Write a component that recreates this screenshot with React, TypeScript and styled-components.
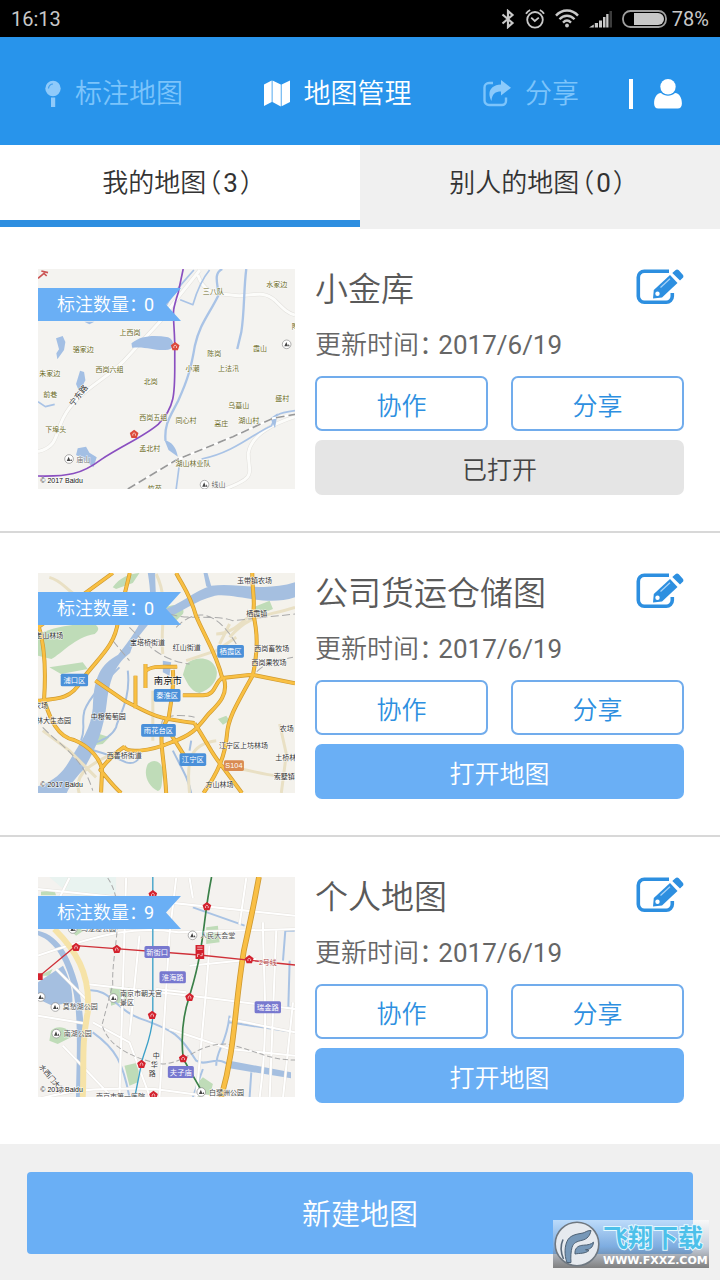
import React from 'react';
import styled, { createGlobalStyle, css } from 'styled-components';

const GlobalStyle = createGlobalStyle`
  * { box-sizing: border-box; }
  body {
    margin: 0;
    background: #fff;
    font-family: Roboto, "Noto Sans CJK SC", sans-serif;
    font-weight: 350;
    color: #333;
  }
  button { font: inherit; cursor: pointer; padding: 0; border: 0; }
  a { color: inherit; text-decoration: none; }
`;

const Page = styled.div`
  position: relative;
  min-height: 100vh;
  display: flex;
  flex-direction: column;
  background: #f0f0f0;
`;

const Digits = styled.span`
  font-weight: 400;
`;

const StatusBar = styled.div`
  display: flex;
  align-items: center;
  justify-content: space-between;
  height: 37px;
  padding: 0 11px;
  background: #000;
  color: #c8c8c8;
  font-size: 20px;
`;

const StatusIcons = styled.div`
  display: flex;
  align-items: center;
  gap: 10px;
`;

const Battery = styled.div`
  display: flex;
  align-items: center;
  gap: 5px;
`;

const Nav = styled.nav`
  display: flex;
  align-items: center;
  height: 108px;
  padding: 5px 38px 0 44px;
  background: #2894eb;
  color: #fff;
`;

const NavLinks = styled.div`
  flex: 1;
  display: flex;
  justify-content: space-between;
`;

const NavLink = styled.a<{ $active?: boolean }>`
  display: flex;
  align-items: center;
  gap: 13px;
  padding-left: ${(p) => (p.$active ? 8 : 0)}px;
  font-size: 27px;
  line-height: 40px;
  color: ${(p) => (p.$active ? '#fff' : '#7cc4fb')};
`;

const Divider = styled.span`
  width: 4px;
  height: 30px;
  margin: 0 21px 0 50px;
  background: #fff;
`;

const IconButton = styled.button`
  display: flex;
  background: none;
`;

const Tabs = styled.div`
  display: flex;
  height: 84px;
  background: #fff;
`;

const Tab = styled.button<{ $active?: boolean }>`
  flex: 1;
  display: flex;
  align-items: center;
  justify-content: center;
  gap: 2px;
  padding: 0 5px 9px 0;
  font-size: 26px;
  line-height: 38px;
  color: #333;
  font-feature-settings: "halt";
  background: #f0f0f0;
  ${(p) =>
    p.$active &&
    css`
      height: 82px;
      padding-bottom: 0;
      background: #fff;
      border-bottom: 7px solid #2d8ee0;
    `}
`;

const TabCount = styled.span`
  display: flex;
  gap: 2px;
`;

const CardList = styled.main`
  background: #fff;
`;

const Card = styled.article`
  display: flex;
  gap: 20px;
  padding: 40px 36px 36px 38px;
  border-bottom: 2px solid #d8d8d8;
  &:last-child {
    padding-bottom: 41px;
    border-bottom: 0;
  }
`;

const MapThumb = styled.div`
  position: relative;
  flex: none;
  width: 257px;
  height: 220px;
  overflow: hidden;
  background: #f4f3f0;
`;

const MapSvg = styled.svg`
  display: block;
  width: 100%;
  height: 100%;
  font-family: "Liberation Sans", "Noto Sans CJK SC", sans-serif;
  font-weight: 400;
`;

const Ribbon = styled.span`
  position: absolute;
  left: 0;
  top: 19px;
  display: flex;
  gap: 6px;
  width: 143px;
  height: 33px;
  padding-left: 19px;
  font-size: 18px;
  line-height: 33px;
  white-space: nowrap;
  color: #fff;
  background: #6aaff5;
  font-feature-settings: "halt";
  clip-path: polygon(0 0, 100% 0, 128px 50%, 100% 100%, 0 100%);
`;

const CardBody = styled.div`
  flex: 1;
  min-width: 0;
`;

const CardHead = styled.div`
  display: flex;
  justify-content: space-between;
  align-items: flex-start;
`;

const CardTitle = styled.h2`
  margin: 0;
  font-size: 33px;
  line-height: 42px;
  font-weight: inherit;
  color: #5a5a5a;
`;

const Updated = styled.p`
  margin: 17px 0 14px;
  font-size: 26px;
  line-height: 34px;
  color: #666;
  font-feature-settings: "halt";
`;

const ButtonRow = styled.div`
  display: flex;
  gap: 23px;
  margin-bottom: 9px;
`;

const OutlineButton = styled.button`
  flex: 1;
  height: 55px;
  padding-top: 1px;
  border: 2px solid #71acec;
  border-radius: 7px;
  background: #fff;
  color: #2d8fe0;
  font-size: 25px;
`;

const OpenButton = styled.button`
  display: block;
  width: 100%;
  height: 55px;
  padding-top: 1px;
  border-radius: 7px;
  background: #6aaff5;
  color: #fff;
  font-size: 25px;
  &:disabled {
    background: #e5e5e5;
    color: #444;
    cursor: default;
  }
`;

const Footer = styled.footer`
  padding: 28px 27px 26px;
`;

const CreateButton = styled.button`
  display: block;
  width: 100%;
  height: 82px;
  padding-bottom: 2px;
  border-radius: 4px;
  background: #6aaff5;
  color: #fff;
  font-size: 29px;
`;

const Watermark = styled.div`
  position: absolute;
  right: 11px;
  bottom: 12px;
  display: flex;
  gap: 3px;
  width: 156px;
  height: 48px;
  padding: 1px 1px 0;
  background: linear-gradient(rgba(255, 255, 255, 0.55), rgba(150, 170, 200, 0.45) 55%, rgba(90, 90, 90, 0.75));
`;

const WatermarkText = styled.div`
  display: flex;
  flex-direction: column;
`;

const WatermarkName = styled.span`
  font-size: 25px;
  line-height: 36px;
  font-weight: 700;
  color: #4cc0ea;
  -webkit-text-stroke: 2px #e4f8ff;
  paint-order: stroke fill;
`;

const WatermarkUrl = styled.span`
  font-family: "DejaVu Sans", sans-serif;
  font-size: 11px;
  line-height: 8px;
  font-weight: 700;
  color: #fff;
`;

/* ---------- icons ---------- */

const BluetoothIcon = () => (
  <svg width="14" height="20" viewBox="0 0 14 20" fill="none" stroke="#c8c8c8" strokeWidth="2.2">
    <path d="M1.500 5.500 11.500 14 7 18V2L11.500 6 1.500 14.500" />
  </svg>
);

const AlarmIcon = () => (
  <svg width="20" height="20" viewBox="0 0 20 20" fill="none" stroke="#c8c8c8" strokeWidth="1.8">
    <circle cx="10" cy="10.8" r="7.8" />
    <path d="M1 4.800C2 3 3.400 1.800 5.200 1M19 4.800C18 3 16.600 1.800 14.800 1M6.200 8.600 9.800 12l4-3.400" />
  </svg>
);

const WifiIcon = () => (
  <svg width="24" height="19" viewBox="0 0 24 19" fill="none" stroke="#c8c8c8" strokeWidth="2.4">
    <path d="M1 6.600C7-.2 17-.2 23 6.600M4.500 10.200c4.300-4.600 10.700-4.600 15 0M8 13.600c2.500-2.500 5.500-2.500 8 0" />
    <circle cx="12" cy="16.500" r="1.900" fill="#c8c8c8" stroke="none" />
  </svg>
);

const SignalIcon = () => (
  <svg width="23" height="18" viewBox="0 0 23 18" fill="#c8c8c8">
    <path d="M0 17.500 4.800 14.500v3zM5.800 13H9v4.500H5.800zM10 10.500h3v7h-3zM14 7h2.500v10.500H14zM17.200 4h2.300v13.500h-2.300z" />
    <path d="M20.500 1H23v16.500h-2.500z" fill="#3c3c3c" />
  </svg>
);

const BatteryIcon = () => (
  <svg width="45" height="18" viewBox="0 0 45 18">
    <rect x="1" y="1" width="43" height="16" rx="7.500" fill="none" stroke="#a0a0a0" strokeWidth="1.800" />
    <path d="M12 3h24a6 6 0 0 1 0 12H12z" fill="#c8c8c8" />
  </svg>
);

const PinIcon = () => (
  <svg width="18" height="28" viewBox="0 0 18 28">
    <circle cx="9" cy="8.500" r="7.700" fill="#8fcafa" />
    <path d="M4.500 8.500A4.500 4.500 0 0 1 9 4" fill="none" stroke="#3f9fee" strokeWidth="1.200" />
    <path d="M7 17.500h4.200V27H7z" fill="#8fcafa" />
  </svg>
);

const MapIcon = () => (
  <svg width="28" height="28" viewBox="0 0 28 28" fill="#fff">
    <path d="M1 4.500 8.700.5v21.500L1 26zM9.500.5l8.300 4V26.500l-8.300-4.500zM18.600 4.500 27 .5v21.500l-8.400 4.300z" />
  </svg>
);

const ShareIcon = () => (
  <svg width="29" height="27" viewBox="0 0 29 27">
    <path d="M10 3H6A4.500 4.500 0 0 0 1.500 7.500v13A4.500 4.500 0 0 0 6 25h13a4 4 0 0 0 4-4v-3.500" fill="none" stroke="#7cc4fb" strokeWidth="2.400" />
    <path d="M18 0l10 7.800-10 7.800v-4c-5.500 0-9 2.400-9.500 9.300C3.500 12 8 4.600 18 4.400z" fill="#8bcafb" />
  </svg>
);

const UserIcon = () => (
  <svg width="28" height="30" viewBox="0 0 28 30" fill="#fff">
    <circle cx="14" cy="7.800" r="7.700" />
    <path d="M7 14c4 3.600 10 3.600 14 0 4.700.5 6.900 5 6.900 10.500 0 3-1.500 5-4.200 5H4.300c-2.700 0-4.200-2-4.200-5C.1 19 2.300 14.500 7 14z" />
  </svg>
);

const EditIcon = () => (
  <svg width="50" height="36" viewBox="0 0 50 36" fill="#2d8fe0">
    <path
      d="M35 2.200H10.300a6 6 0 0 0-6 6v19a6 6 0 0 0 6 6h22a6 6 0 0 0 6-6V24"
      fill="none"
      stroke="#2d8fe0"
      strokeWidth="3.600"
    />
    <path d="M19 29.500 19.800 21 36 6l7.500 8L28 28.500z" />
    <path d="M38.300 4 41.400 1.200c1-1 2.500-.9 3.400.1l4 4.400c.9 1 .8 2.500-.2 3.400L46 11.500z" />
    <circle cx="23.500" cy="24.700" r="2.200" fill="#fff" />
    <path d="M26.500 18.500 36 9.800" stroke="#a9d3f7" strokeWidth="1.200" />
  </svg>
);

const WatermarkLogo = () => (
  <svg width="46" height="46" viewBox="0 0 46 46">
    <circle cx="23" cy="23" r="21.800" fill="#e6eaef" stroke="#6f7881" strokeWidth="1.600" />
    <path
      d="M13 41.500C10 34 10.500 24 14 18.500c3.500-5 10-5.500 15-6.500 2.500-.6 3.500-2.500 8-2.500-1 5-3.500 8.500-9 9.800-5 1.200-8.500 2.200-10 7.200-1 4-1.500 9-1 15z"
      fill="#7798b8"
      stroke="#4d6175"
    />
    <path
      d="M21 31c.5-5 4-6.500 8.500-6.800 4.500-.2 7.500-.8 10-3-.5 5.500-4 7.500-8 7.500l3.500.8c-4 3.500-9.500 2.500-14 3.500z"
      fill="#7798b8"
      stroke="#4d6175"
    />
    <path d="M9.500 38C6.500 31 6.500 24 9 18.500" fill="none" stroke="#59697a" strokeWidth="1.600" />
  </svg>
);

/* ---------- map drawings ---------- */

type LabelProps = { x: number; y: number; children: string; size?: number; fill?: string; rotate?: number };

const Label = ({ x, y, children, size = 21, fill = '#333', rotate }: LabelProps) => (
  <text
    x={x}
    y={y}
    fontSize={size}
    fill={fill}
    stroke="#fff"
    strokeWidth="3"
    strokeOpacity="0.8"
    paintOrder="stroke"
    transform={rotate ? `rotate(${rotate} ${x} ${y})` : undefined}
  >
    {children}
  </text>
);

type BadgeProps = { x: number; y: number; w: number; h?: number; fill: string; children: string };

const Badge = ({ x, y, w, h = 38, fill, children }: BadgeProps) => (
  <g>
    <rect x={x} y={y} width={w} height={h} rx="5" fill={fill} />
    <text x={x + w / 2} y={y + h / 2 + 8} fontSize="22" fill="#fff" textAnchor="middle">
      {children}
    </text>
  </g>
);

const Station = ({ x, y, fill = '#d3222e' }: { x: number; y: number; fill?: string }) => (
  <g transform={`translate(${x} ${y})`}>
    <path d="M0-13 13-3 8 12H-8L-13-3z" fill={fill} />
    <path d="M-4 5v-5l4-4 4 4v5" fill="none" stroke="#fff" strokeWidth="2" />
  </g>
);

const Spot = ({ x, y }: { x: number; y: number }) => (
  <g transform={`translate(${x} ${y})`}>
    <circle r="13" fill="#fff" stroke="#888" strokeWidth="2" />
    <path d="M-7 6-1-7 4 6zM4 6 6-1 9 6z" fill="#444" />
  </g>
);

const Copyright = () => (
  <text x="33" y="670" fontSize="21" fill="#111" stroke="#fff" strokeWidth="3" paintOrder="stroke">
    © 2017 Baidu
  </text>
);

const OLIVE = '#6b6a1e';

const VILLAGE_LANES =
  'M26 575c60-15 50-50 75-100 40-80 120-110 180-170l110-120 60-80 60-75M505 45c20 60 60 55 100 60 60 10 90-20 130 15 30 30 40 40 61 45M796 470c-60 20-130 50-140 110 0 60 30 70-70 107';

const VillageMap = () => (
  <MapSvg viewBox="26 27 770 660" preserveAspectRatio="none" aria-hidden="true">
    <rect x="26" y="27" width="770" height="660" fill="#f4f3f0" />
    <path d={VILLAGE_LANES} fill="none" stroke="#e2e0dc" strokeWidth="12" />
    <path d={VILLAGE_LANES} fill="none" stroke="#fcfcfa" strokeWidth="9" />
    <g fill="none" stroke="#a9c3e6" strokeWidth="7" strokeLinejoin="round">
      <path d="M578 27c-30 15-10 50-12 80-30 60-55 85-70 150-10 60-20 100-50 165-25 50-42 70-38 120M650 27c-8 60-5 130-15 190l-12 50" />
      <path d="M408 140c20-40 50-70 85-110M540 30c-25 30-40 70-50 104l-38-15M26 425l22 15 28-7" strokeWidth="5" />
      <path d="M796 452c-60 8-60 15-70 45-50 20-110 80-210 100M450 610l-10 77" strokeWidth="5" />
    </g>
    <g fill="#a3bfe4">
      <path d="M80 235l20-7 8 18-4 24-20 28-3-18 8-12zM140 372l12-40 12 4 4 25-18 35zM306 250c30-25 70-25 110-18 20 8 20 35 0 37-40 5-60-10-108-6zM405 540c20 5 35 20 40 50l-28-20zM145 565l25-5 10 18 22 14-10 30-30-25-22-12zM722 475l22-15-8 45zM165 185h30l-15 8z" />
    </g>
    <path d="M295 687 440 600l170-70 120-55 66-12" fill="none" stroke="#fff" strokeWidth="6" />
    <path d="M295 687 440 600l170-70 120-55 66-12" fill="none" stroke="#999" strokeWidth="5" strokeDasharray="26 12" />
    <path d="M26 648c90 2 130-5 190-50 60-40 130-70 170-105 60-60 48-110 50-235-3-110-12-90 10-160l15-71" fill="none" stroke="#8a4fc0" strokeWidth="5" />
    <path d="M26 55l18-15 8 8M36 33l20 5" fill="none" stroke="#c55" strokeWidth="5" />
    <Station x={437} y={259} fill="#dc4a3a" />
    <Station x={314} y={522} fill="#dc4a3a" />
    <Label x={520} y={103} fill={OLIVE}>三八队</Label>
    <Label x={710} y={80} fill={OLIVE}>水家边</Label>
    <Label x={270} y={224} fill={OLIVE}>上西岗</Label>
    <Label x={130} y={277} fill={OLIVE}>骆家边</Label>
    <Label x={198} y={335} fill={OLIVE}>西岗六组</Label>
    <Label x={30} y={347} fill={OLIVE}>朱家边</Label>
    <Label x={343} y={372} fill={OLIVE}>北岗</Label>
    <Label x={42} y={412} fill={OLIVE}>前巷</Label>
    <Label x={468} y={332} fill={OLIVE}>小潮</Label>
    <Label x={533} y={288} fill={OLIVE}>陈岗</Label>
    <Label x={565} y={332} fill={OLIVE}>上法汛</Label>
    <Label x={670} y={272} fill={OLIVE}>霞山</Label>
    <Label x={786} y={207} fill={OLIVE}>陶</Label>
    <Label x={737} y={422} fill={OLIVE}>盛村</Label>
    <Label x={596} y={444} fill={OLIVE}>乌墓山</Label>
    <Label x={329} y={481} fill={OLIVE}>西岗五组</Label>
    <Label x={438} y={488} fill={OLIVE}>同心村</Label>
    <Label x={554} y={498} fill={OLIVE}>高庄</Label>
    <Label x={626} y={488} fill={OLIVE}>湖山村</Label>
    <Label x={48} y={517} fill={OLIVE}>下埠头</Label>
    <Label x={329} y={573} fill={OLIVE}>孟北村</Label>
    <Label x={438} y={618} fill={OLIVE}>湖山林业队</Label>
    <Label x={355} y={694} fill={OLIVE}>竹苑</Label>
    <Label x={132} y={440} size={24} rotate={-52}>宁东路</Label>
    <Spot x={119} y={597} />
    <Label x={141} y={605} fill="#777">庙山</Label>
    <Spot x={771} y={253} />
    <Spot x={525} y={674} />
    <Label x={546} y={682} fill="#666">线山</Label>
    <Copyright />
  </MapSvg>
);

const CITY_ROADS =
  'M250 27 150 100 26 190M26 180c20 60 25 130 18 230M26 410c60-5 100-5 130-60 50-70 100-100 110-180l35-143M44 408c20 60 40 110 90 120 50 20 80 60 84 90l-3 67M198 350l90 62 50 25c40 20 60 28 157 40M318 335v98M348 300v72M348 322c20-20 60-12 95-14M430 318c5 50-5 90-12 140-40 60-15 90-8 229M440 27c20 40 40 60 60 130 25 60 60 110 78 185l88-10 130 26M460 394h60c40 0 35-40 58-52M583 344c15 50-20 80-45 105-30 35-40 60-110 85-70 30-140 35-145 12M285 548c-30 20-50 40-72 70 25 30 40 50 62 69M495 478c40 60 50 90 80 125l62 84M668 27c0 60 10 90 2 120 15 60 15 110 0 186-50 90-75 130-78 180-5 60-25 110-70 174M425 512l50 80';

const CityMap = () => (
  <MapSvg viewBox="26 27 770 660" preserveAspectRatio="none" aria-hidden="true">
    <rect x="26" y="27" width="770" height="660" fill="#f4f2ec" />
    <g fill="#bfdcb8">
      <path d="M250 70c20-30 50-40 80-43l-20 30-50 18zM26 215c30-25 100-30 150-40 30 5 40 20 20 35-60 10-100 60-130 75l-40-10zM410 130c30-15 60 0 50 20l-30 30-25-25zM470 300c30-25 70-20 85 5 20 30-5 70-45 82-30-5-40-40-50-55zM355 600c20-20 50-5 45 35-5 25 0 40-15 46-30-15-45-50-30-81zM670 130l50-20 10 25-50 20zM60 310l100-15 15 20-80 15zM180 530l30-20 30 10-20 20-38 5zM565 465l25-10 10 15-20 12z" />
    </g>
    <g fill="#a5bfe0">
      <path d="M355 27h22c0 60 10 110-10 140-20 30-55 60-65 100-40 30-60 70-70 150-10 90-40 150-70 200-30 30-40 50-50 70H26v-20c60-20 80-50 105-95 40-60 60-100 60-160 5-70 20-110 75-140 40-50 60-80 75-115 25-30 25-60 14-130zM395 140c60-20 100-60 150-75 80-10 160 20 251-10v45c-90 30-180-15-240-5-60 15-100 50-160 75zM522 27h12l14 50-18-10zM400 290l25 5-5 40-20-10z" />
    </g>
    <g fill="none" stroke="#a5bfe0" strokeWidth="6">
      <path d="M270 310c-50 50-90 90-105 130-10 40 5 50-10 90M295 320c10 90-30 140-35 170-20 40-60 40-90 60M180 555c60 20 60 15 110 40 30 10 40-15 45-20M480 560l5-30M430 560c30 60 45 80 55 127" />
    </g>
    <g fill="none" stroke="#e9e0c4" strokeWidth="9">
      <path d="M60 40c40 10 50 40 90 60M150 690c-20-60 30-90 120-130M370 380v150M600 220c60-70 100-60 196-90M560 210c60 0 90-60 130-70M600 180l-30 60M750 480l20 90-15 117M580 610c80 0 150 40 216 20M560 530c-80 10-90 60-80 157M470 290l90-30 60-40M380 30c40 80 10 160 20 240M40 500l80 60 80 80" />
    </g>
    <g fill="none" stroke="#aaa" strokeWidth="3" strokeDasharray="24 10">
      <path d="M420 150c60 20 140 0 190 20l186-20M300 190c60 60 100 100 180 110M400 490c-20-40 60-40 95-30M40 490c60 60 120 90 150 190M250 230l50 60M440 190c60-60 120-50 180 50M660 350c40-60 80-60 130-70" />
    </g>
    <path d={CITY_ROADS} fill="none" stroke="#cf9a30" strokeWidth="12" strokeLinejoin="round" />
    <path d={CITY_ROADS} fill="none" stroke="#f9c043" strokeWidth="8" strokeLinejoin="round" />
    <Label x={622} y={57}>玉带镇农场</Label>
    <Label x={650} y={155}>栖霞镇</Label>
    <Label x={18} y={222}>老山林场</Label>
    <Label x={302} y={243}>宝塔桥街道</Label>
    <Label x={430} y={258}>红山街道</Label>
    <Label x={674} y={261}>西岗畜牧场</Label>
    <Label x={666} y={304}>西岗果牧场</Label>
    <Label x={373} y={361} size={28} fill="#111">南京市</Label>
    <Label x={14} y={432}>农场</Label>
    <Label x={20} y={477}>林大生态园</Label>
    <Label x={184} y={466}>中粮葡萄园</Label>
    <Label x={232} y={581}>西善桥街道</Label>
    <Label x={568} y={552}>江宁区上坊林场</Label>
    <Label x={750} y={502}>农场</Label>
    <Label x={737} y={588}>土桥林场</Label>
    <Label x={732} y={645}>索墅镇</Label>
    <Label x={528} y={668}>方山林场</Label>
    <Badge x={94} y={329} w={82} fill="#4a90d9">浦口区</Badge>
    <Badge x={373} y={375} w={80} fill="#4a90d9">秦淮区</Badge>
    <Badge x={335} y={480} w={104} fill="#4a90d9">雨花台区</Badge>
    <Badge x={563} y={243} w={80} fill="#4a90d9">栖霞区</Badge>
    <Badge x={450} y={568} w={80} fill="#4a90d9">江宁区</Badge>
    <Badge x={583} y={589} w={60} h={32} fill="#d98b52">S104</Badge>
    <Copyright />
  </MapSvg>
);

const DOWNTOWN_STREETS =
  'M26 60l770 80M26 260c200-70 300-90 420-70l350-10M26 440l150 25M170 345l350 40 276 35M100 530l150 157M26 690c150-40 250-30 350-30l200 27M290 27l-20 660M330 200l-30 300M440 27l-20 170-30 490M480 27l10 60M700 160c0 170 20 300-10 527M740 180l-20 507M790 400l-30 287M380 360l90 10M420 480l180 60 196 20M540 230l-10 130-30 327M80 300l100 100M600 450l196 40M120 27l-30 60M480 290l200-20M190 460l110 60 60 160M650 27l-20 140';

const DowntownMap = () => (
  <MapSvg viewBox="26 24 770 660" preserveAspectRatio="none" aria-hidden="true">
    <rect x="26" y="24" width="770" height="660" fill="#f4f2ef" />
    <path d="M60 24h200v50l-130 10z" fill="#e9f3f0" />
    <g fill="#bfdcb8">
      <path d="M35 68l40-5 5 16H35zM530 175l35-5 5 50-40 5zM240 350l60 5-10 40-45 15zM65 485c20-20 60-10 60 20l-40 20-25-10zM285 590l45-10-5 60-25 10zM500 645l20-20 30 20-10 40h-40zM120 180h50l-30 20zM30 320l40-20-10 20z" />
    </g>
    <g fill="#a5bfe0">
      <path d="M26 340l75-50c10 20 30 60 28 110l-60 10-43-20zM26 185c70 15 100 90 120 160 20 100 25 200 8 339h-14c0-80 10-240-10-325-20-80-50-140-104-160zM600 575l184 35v18l-184-30z" />
    </g>
    <g fill="none" stroke="#a9c3e4" strokeWidth="6">
      <path d="M170 365c80-10 80 60 180 90 80 30 100 40 150 120 30 20 60-20 100 15M490 115l155 55M795 185h-28l-7 90M780 275l-4 140 20 5M600 440c-10 90-40 100-40 150M665 610l-5 74M600 460l196 30M190 490c70 50 90 90 110 194M520 600l-30 84" />
    </g>
    <g stroke="#e6e3de" strokeWidth="9" fill="none"><path d={DOWNTOWN_STREETS} /></g>
    <g stroke="#fff" strokeWidth="6" fill="none"><path d={DOWNTOWN_STREETS} /></g>
    <path d="M75 180c60 60 110 130 100 250-20 100-10 160-15 254" fill="none" stroke="#f6e3a8" strokeWidth="18" />
    <path d="M235 27c60 90 10 220 15 320l-32 120c20 80 130 110 180 118 80-5 100-60 190-60 70 10 130 50 208 48" fill="none" stroke="#aaa" strokeWidth="3" strokeDasharray="16 8" />
    <path d="M688 24c-20 110-30 150-45 220-30 180-25 290-68 440" fill="none" stroke="#cf9a30" strokeWidth="17" />
    <path d="M688 24c-20 110-30 150-45 220-30 180-25 290-68 440" fill="none" stroke="#f9bf45" strokeWidth="12" />
    <path d="M370 24v420c-5 70-30 110-34 140l-20 100" fill="none" stroke="#3ba0c8" strokeWidth="4" />
    <path d="M546 24c-20 100-20 150-35 230-10 60-20 90-32 130-20 60-25 120-18 185l60 105" fill="none" stroke="#3a8048" strokeWidth="5" />
    <path d="M26 325 140 230l370 28 286 30" fill="none" stroke="#cf3038" strokeWidth="4" />
    <Station x={370} y={76} />
    <Station x={532} y={112} />
    <Station x={140} y={234} />
    <Station x={262} y={240} />
    <Station x={659} y={271} />
    <Station x={480} y={384} />
    <Station x={368} y={438} />
    <Station x={336} y={585} />
    <Station x={461} y={568} />
    <Station x={372} y={678} />
    <path d="M20 313h20v20H20zM498 228h26v42h-26z" fill="#d3222e" />
    <path d="M503 234h16M503 241h16M504 264v-8h6M518 252v8h-6" stroke="#fff" strokeWidth="2" fill="none" />
    <Label x={155} y={186} fill="#555">乌龙潭公园</Label>
    <Label x={512} y={206} fill="#555">人民大会堂</Label>
    <Label x={688} y={288} fill="#b24a4a">2号线</Label>
    <Label x={272} y={381} fill="#444">南京市朝天宫</Label>
    <Label x={272} y={408} fill="#444">景区</Label>
    <Label x={100} y={420} fill="#555">莫愁湖公园</Label>
    <Label x={103} y={501} fill="#555">南湖公园</Label>
    <Label x={370} y={568}>中</Label>
    <Label x={364} y={594}>华</Label>
    <Label x={358} y={622}>路</Label>
    <Label x={28} y={594} rotate={50}>水西门大街</Label>
    <Label x={538} y={679} fill="#444">白鹭洲公园</Label>
    <Label x={200} y={689} fill="#444">南京市第一医院</Label>
    <Spot x={130} y={180} />
    <Spot x={489} y={199} />
    <Spot x={252} y={387} />
    <Spot x={78} y={414} />
    <Spot x={34} y={384} />
    <Spot x={81} y={494} />
    <Spot x={515} y={669} />
    <Badge x={345} y={231} w={76} h={36} fill="#7778cf">新街口</Badge>
    <Badge x={390} y={307} w={79} h={36} fill="#7778cf">淮海路</Badge>
    <Badge x={675} y={397} w={79} h={36} fill="#7778cf">瑞金路</Badge>
    <Badge x={415} y={591} w={78} h={36} fill="#7778cf">夫子庙</Badge>
    <Copyright />
  </MapSvg>
);

type MapEntry = {
  name: string;
  updated: string;
  markers: number;
  opened: boolean;
  Drawing: () => React.ReactElement;
};

const MAPS: MapEntry[] = [
  { name: '小金库', updated: '2017/6/19', markers: 0, opened: true, Drawing: VillageMap },
  { name: '公司货运仓储图', updated: '2017/6/19', markers: 0, opened: false, Drawing: CityMap },
  { name: '个人地图', updated: '2017/6/19', markers: 9, opened: false, Drawing: DowntownMap },
];

const MapCard = ({ name, updated, markers, opened, Drawing }: MapEntry) => (
  <Card>
    <MapThumb>
      <Drawing />
      <Ribbon>
        <span>标注数量：</span>
        <Digits>{markers}</Digits>
      </Ribbon>
    </MapThumb>
    <CardBody>
      <CardHead>
        <CardTitle>{name}</CardTitle>
        <IconButton type="button" aria-label="编辑">
          <EditIcon />
        </IconButton>
      </CardHead>
      <Updated>
        更新时间： <Digits>{updated}</Digits>
      </Updated>
      <ButtonRow>
        <OutlineButton type="button">协作</OutlineButton>
        <OutlineButton type="button">分享</OutlineButton>
      </ButtonRow>
      <OpenButton type="button" disabled={opened}>
        {opened ? '已打开' : '打开地图'}
      </OpenButton>
    </CardBody>
  </Card>
);

const MapTab = ({ label, count, active }: { label: string; count: number; active?: boolean }) => (
  <Tab type="button" $active={active}>
    <span>{label}</span>
    <TabCount>
      <span>（</span>
      <Digits>{count}</Digits>
      <span>）</span>
    </TabCount>
  </Tab>
);

export default function App() {
  return (
    <>
      <GlobalStyle />
      <Page>
        <StatusBar>
          <Digits>16:13</Digits>
          <StatusIcons>
            <BluetoothIcon />
            <AlarmIcon />
            <WifiIcon />
            <SignalIcon />
            <Battery>
              <BatteryIcon />
              <Digits>78%</Digits>
            </Battery>
          </StatusIcons>
        </StatusBar>
        <Nav>
          <NavLinks>
            <NavLink href="#mark">
              <PinIcon />
              标注地图
            </NavLink>
            <NavLink href="#manage" $active>
              <MapIcon />
              地图管理
            </NavLink>
            <NavLink href="#share">
              <ShareIcon />
              分享
            </NavLink>
          </NavLinks>
          <Divider />
          <IconButton type="button" aria-label="用户">
            <UserIcon />
          </IconButton>
        </Nav>
        <Tabs>
          <MapTab label="我的地图" count={3} active />
          <MapTab label="别人的地图" count={0} />
        </Tabs>
        <CardList>
          {MAPS.map((entry) => (
            <MapCard key={entry.name} {...entry} />
          ))}
        </CardList>
        <Footer>
          <CreateButton type="button">新建地图</CreateButton>
        </Footer>
        <Watermark>
          <WatermarkLogo />
          <WatermarkText>
            <WatermarkName>飞翔下载</WatermarkName>
            <WatermarkUrl>WWW.FXXZ.COM</WatermarkUrl>
          </WatermarkText>
        </Watermark>
      </Page>
    </>
  );
}
